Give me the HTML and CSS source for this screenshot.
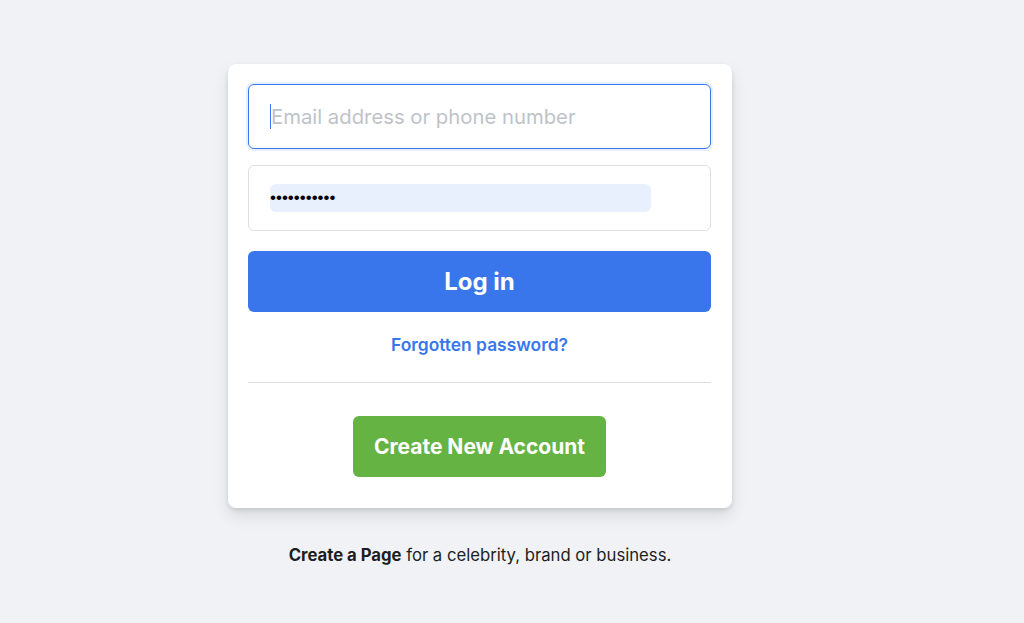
FILE: index.html
```html
<!DOCTYPE html>
<html>
<head>
<meta charset="UTF-8">
<title>Log in</title>
<link rel="stylesheet" href="styles.css">
</head>
<body>
	<div class="page">
		<div class="card">
			<div class="field focus">
				<span class="caret"></span>
				<input type="text" placeholder="Email address or phone number">
			</div>
			<div class="field">
				<input class="filled" type="password" value="abcdefghijk">
			</div>
			<button class="login">Log in</button>
			<a class="forgot" href="#">Forgotten password?</a>
			<div class="line"></div>
			<div class="create-row">
				<button class="create">Create New Account</button>
			</div>
		</div>
		<p class="note"><b>Create a Page</b> for a celebrity, brand or business.</p>
	</div>
</body>
</html>
```

FILE: styles.css
```css
body{
	margin: 0;
	background: #f0f2f5;
	font-family: Inter, "Liberation Sans", Arial, sans-serif;
	color: #1c1e21;
}
.page{
	width: 504px;
	margin-left: 228px;
	padding-top: 64px;
}
.card{
	background: #fff;
	border-radius: 8px;
	box-shadow: 0 2px 4px rgba(0,0,0,0.1), 0 8px 16px rgba(0,0,0,0.1);
	padding: 20px 21px 31px 20px;
	display: flex;
	flex-direction: column;
}
.field{
	height: 64px;
	border: 1px solid #dddfe2;
	border-radius: 6px;
	display: flex;
	align-items: center;
	padding: 0 21px;
}
.field.focus{
	height: 63px;
	margin-bottom: 16px;
	border-color: #3a76eb;
	box-shadow: 0 0 0 2px #e7f0fd;
}
.caret{
	width: 1px;
	height: 25px;
	background: #3a76eb;
}
.field input{
	border: none;
	outline: none;
	font-family: inherit;
	font-size: 20.3px;
	color: #1c1e21;
	padding: 0;
	flex: 1;
	background: transparent;
}
.field input::placeholder{
	color: #bec3c9;
}
.field input.filled{
	flex: none;
	width: 381px;
	height: 28px;
	background: #e8f0fe;
	border-radius: 6px;
	font-family: "Liberation Sans", Arial, sans-serif;
	font-size: 17px;
	color: #000;
}
.login{
	margin-top: 20px;
	height: 61px;
	border: none;
	border-radius: 6px;
	background: #3a76eb;
	color: #fff;
	font-family: inherit;
	font-size: 24px;
	font-weight: bold;
}
.forgot{
	margin-top: 22px;
	line-height: 22px;
	text-align: center;
	color: #3a76eb;
	font-size: 17.4px;
	font-weight: 600;
	text-decoration: none;
}
.line{
	margin-top: 26px;
	height: 1px;
	background: #dadde1;
}
.create-row{
	margin-top: 33px;
	display: flex;
	justify-content: center;
}
.create{
	width: 253px;
	height: 61px;
	border: none;
	border-radius: 6px;
	background: #65b443;
	color: #fff;
	font-family: inherit;
	font-size: 21px;
	font-weight: bold;
}
.note{
	margin: 37px 0 0;
	line-height: 20px;
	text-align: center;
	font-size: 16.7px;
}
```
